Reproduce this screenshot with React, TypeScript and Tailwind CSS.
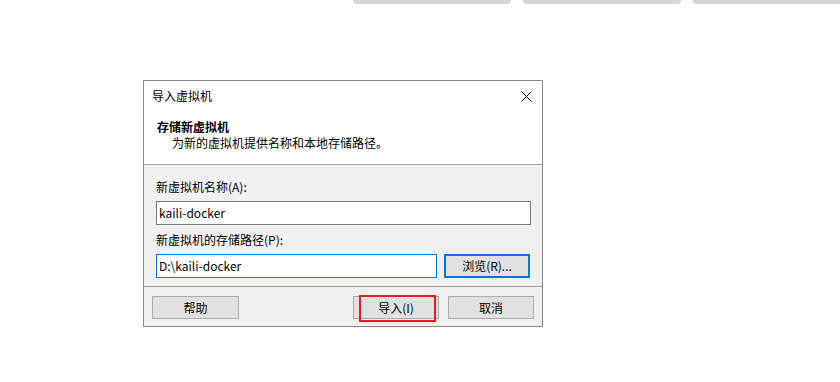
export default function App() {
  const font = { fontFamily: '"Noto Sans CJK SC", "Liberation Sans", sans-serif' };
  return (
    <div className="relative h-[382px] w-[840px] overflow-hidden bg-white text-[12px] text-black" style={font}>
      {/* cut-off tabs at top */}
      <div className="flex h-[4px] gap-[12px] pl-[353px]">
        <div className="h-[4px] w-[158px] shrink-0 rounded-b-[4px] bg-[#d6d6d6]" />
        <div className="h-[4px] w-[158px] shrink-0 rounded-b-[4px] bg-[#d6d6d6]" />
        <div className="h-[4px] w-[158px] shrink-0 rounded-bl-[4px] bg-[#d6d6d6]" />
      </div>

      <div className="ml-[143px] mt-[76px] w-[400px] border border-[#8a8a8a] bg-[#f0f0f0]">
        {/* header */}
        <div className="h-[84px] border-b border-[#a0a0a0] bg-white">
          <div className="flex h-[30px] items-center justify-between pl-[8px] pr-[9px]">
            <span className="leading-[16px]">导入虚拟机</span>
            <svg width="11" height="11" viewBox="0 0 11 11" className="mr-[1px]">
              <path d="M0.5 0.5 L10.5 10.5 M10.5 0.5 L0.5 10.5" stroke="#000" strokeWidth="1" fill="none" />
            </svg>
          </div>
          <div className="mt-[8px] pl-[13px] font-bold leading-[16px]">存储新虚拟机</div>
          <div className="pl-[28px] leading-[16px]">为新的虚拟机提供名称和本地存储路径。</div>
        </div>

        {/* body */}
        <div className="h-[122px] border-b border-[#a0a0a0] pl-[12px] pt-[14px]">
          <div className="leading-[16px]">新虚拟机名称(A):</div>
          <div className="mt-[6px] flex h-[24px] w-[375px] items-center border border-[#7a7a7a] bg-white pl-[2px]">
            kaili-docker
          </div>
          <div className="mt-[7px] leading-[16px]">新虚拟机的存储路径(P):</div>
          <div className="mt-[6px] flex gap-[7px]">
            <div className="flex h-[24px] w-[281px] items-center border border-[#0078d7] bg-white pl-[2px]">
              D:\kaili-docker
            </div>
            <div className="flex h-[24px] w-[86px] items-center justify-center border-2 border-[#0078d7] bg-[#e1e1e1]">
              浏览(R)...
            </div>
          </div>
        </div>

        {/* footer */}
        <div className="flex h-[39px] items-start pl-[8px] pt-[9px]">
          <div className="flex h-[23px] w-[87px] items-center justify-center border border-[#adadad] bg-[#e1e1e1]">
            帮助
          </div>
          <div className="relative ml-[114px] flex h-[23px] w-[86px] items-center justify-center border border-[#adadad] bg-[#e1e1e1]">
            导入(I)
            <div className="absolute left-[5px] top-[-2px] h-[27px] w-[77px] border-2 border-[#e81c24]" />
          </div>
          <div className="ml-[9px] flex h-[23px] w-[86px] items-center justify-center border border-[#adadad] bg-[#e1e1e1]">
            取消
          </div>
        </div>
      </div>
    </div>
  );
}
